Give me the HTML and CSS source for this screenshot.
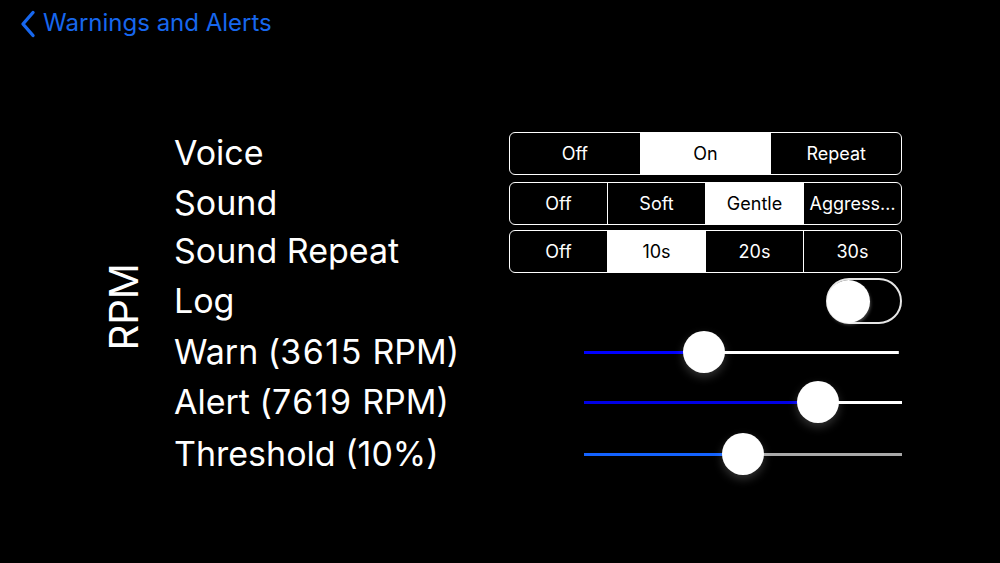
FILE: index.html
```html
<!DOCTYPE html>
<html lang="en">
<head>
<meta charset="utf-8">
<title>Warnings and Alerts</title>
<link rel="stylesheet" href="styles.css">
</head>
<body>
<header class="nav">
  <a class="back" href="#">
    <svg class="chev" width="16" height="28" viewBox="0 0 16 28" aria-hidden="true"><path d="M13 2.5 L3 14 L13 25.5" fill="none" stroke="currentColor" stroke-width="3.4" stroke-linecap="round" stroke-linejoin="round"/></svg>
    <span>Warnings and Alerts</span>
  </a>
</header>
<main class="main">
  <div class="section-title">RPM</div>
  <div class="rows">
    <div class="label">Voice</div>
    <div class="seg seg3">
      <div class="opt">Off</div>
      <div class="opt sel">On</div>
      <div class="opt">Repeat</div>
    </div>

    <div class="label">Sound</div>
    <div class="seg">
      <div class="opt">Off</div>
      <div class="opt">Soft</div>
      <div class="opt sel">Gentle</div>
      <div class="opt">Aggress…</div>
    </div>

    <div class="label">Sound Repeat</div>
    <div class="seg">
      <div class="opt">Off</div>
      <div class="opt sel">10s</div>
      <div class="opt">20s</div>
      <div class="opt">30s</div>
    </div>

    <div class="label">Log</div>
    <div class="toggle"><div class="knob"></div></div>

    <div class="label">Warn (<span class="num">3615</span> RPM)</div>
    <div class="slider warn" style="--v:37.7%"><div class="thumb"></div></div>

    <div class="label">Alert (<span class="num">7619</span> RPM)</div>
    <div class="slider alert" style="--v:73.6%"><div class="thumb"></div></div>

    <div class="label">Threshold (10%)</div>
    <div class="slider thresh" style="--v:50%"><div class="thumb"></div></div>
  </div>
</main>
</body>
</html>
```
FILE: styles.css
```css
html, body {
  margin: 0;
  padding: 0;
  background: #000;
  color: #fff;
  font-family: "Inter", "Liberation Sans", sans-serif;
  width: 1000px;
  height: 563px;
  overflow: hidden;
}

.nav {
  height: 46px;
  display: flex;
  align-items: center;
  padding-left: 20px;
}

.back {
  display: flex;
  align-items: center;
  gap: 7px;
  color: #1767ee;
  text-decoration: none;
  font-size: 24px;
  line-height: 1;
}

.chev {
  display: block;
  margin-top: 1px;
}

.main {
  display: flex;
  padding-top: 82px;
  padding-left: 104px;
}

.section-title {
  writing-mode: vertical-rl;
  transform: rotate(180deg);
  font-size: 40px;
  line-height: 40px;
  width: 40px;
  align-self: center;
  margin-right: 30px;
  margin-top: 6px;
  text-align: center;
}

.rows {
  display: grid;
  grid-template-columns: 335px 393px;
  grid-template-rows: 50px 50px 46px 54px 48px 52px 52px;
  align-items: center;
}

.label {
  font-size: 34px;
  line-height: 1;
  white-space: nowrap;
}

.num {
  letter-spacing: 1.5px;
}

.seg {
  display: flex;
  height: 43px;
  box-sizing: border-box;
  border: 1.5px solid #fff;
  border-radius: 6px;
  overflow: hidden;
}

.opt {
  flex: 1;
  display: flex;
  align-items: center;
  justify-content: center;
  font-size: 18px;
  white-space: nowrap;
  border-left: 1.5px solid #fff;
}

.opt:first-child {
  border-left: none;
}

.opt.sel {
  background: #fff;
  color: #000;
}

.toggle {
  justify-self: end;
  width: 76px;
  height: 46px;
  box-sizing: border-box;
  border: 2px solid #e6e6e6;
  border-radius: 23px;
  display: flex;
  align-items: center;
}

.knob {
  width: 43px;
  height: 43px;
  border-radius: 50%;
  background: #fff;
  margin-left: -1px;
  box-shadow: 1px 2px 3px rgba(255, 255, 255, 0.25);
}

.slider {
  justify-self: end;
  width: 318px;
  height: 42px;
  position: relative;
  --left: #0000ff;
  --right: #ffffff;
  background: linear-gradient(to right, var(--left) 0, var(--left) var(--v), var(--right) var(--v), var(--right) 100%) no-repeat center / 100% 3px;
}

.slider.alert {
  --left: #0000e6;
}

.slider.thresh {
  --left: #1463ff;
  --right: #a8a8a8;
}

.slider.warn {
  background-size: 99% 3px;
  background-position: left center;
}

.thumb {
  position: absolute;
  top: 0;
  left: var(--v);
  width: 42px;
  height: 42px;
  margin-left: -21px;
  border-radius: 50%;
  background: #fff;
  box-shadow: 0 4px 10px rgba(255, 255, 255, 0.2);
}
```
